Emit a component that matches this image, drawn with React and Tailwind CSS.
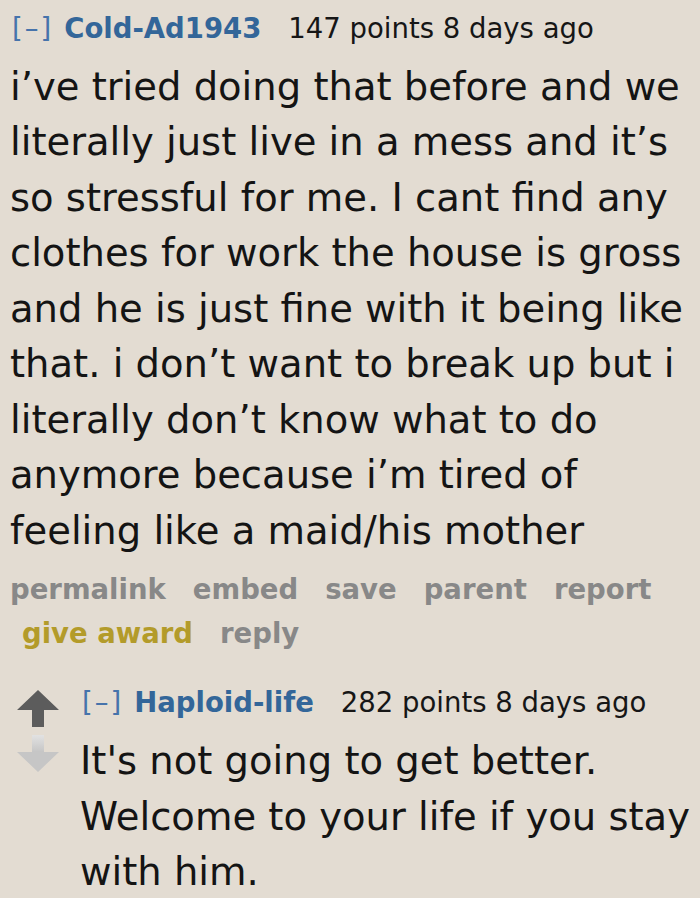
import React from 'react';

const UpArrow = () => (
  <svg width="42" height="37" viewBox="0 0 42 37">
    <path d="M21 0 L42 20 L27 20 L27 37 L15 37 L15 20 L0 20 Z" fill="#5c5c5c" />
  </svg>
);

const DownArrow = () => (
  <svg width="42" height="37" viewBox="0 0 42 37">
    <defs>
      <linearGradient id="dg" x1="0" y1="0" x2="0" y2="1">
        <stop offset="0" stopColor="#e2e2e2" />
        <stop offset="0.45" stopColor="#c6c6c6" />
        <stop offset="1" stopColor="#c6c6c6" />
      </linearGradient>
    </defs>
    <path d="M15 0 L27 0 L27 17 L42 17 L21 37 L0 17 L15 17 Z" fill="url(#dg)" />
  </svg>
);

const sans = { fontFamily: '"DejaVu Sans", Verdana, sans-serif' };

const firstLines = [
  'i’ve tried doing that before and we',
  'literally just live in a mess and it’s',
  'so stressful for me. I cant find any',
  'clothes for work the house is gross',
  'and he is just fine with it being like',
  'that. i don’t want to break up but i',
  'literally don’t know what to do',
  'anymore because i’m tired of',
  'feeling like a maid/his mother',
];

const replyLines = [
  "It's not going to get better.",
  'Welcome to your life if you stay',
  'with him.',
];

const Tagline = ({ author, points }) => (
  <div className="flex items-baseline whitespace-nowrap text-[27.5px] leading-[36px]">
    <span className="pl-[2px] text-[#4673ab] tracking-[2px]">[–]</span>
    <span className="ml-[11px] font-bold text-[#336699]">{author}</span>
    <span className="ml-[27px] text-[#161616]">{points} points 8 days ago</span>
  </div>
);

export default function App() {
  return (
    <div className="min-h-[898px] w-[700px] bg-[#e3dcd2] overflow-hidden" style={sans}>
      {/* first comment */}
      <div className="pl-[10px] pt-[9.5px]">
        <Tagline author="Cold-Ad1943" points="147" />
        <div className="mt-[13.4px] text-[38.5px] leading-[55.5px] text-[#141414]">
          {firstLines.map((line, i) => (
            <div key={i} className="whitespace-nowrap">{line}</div>
          ))}
        </div>
        <div className="mt-[8.25px] text-[27.5px] leading-[44px] font-bold text-[#888888] whitespace-nowrap">
          <div className="flex gap-[27px]">
            <span>permalink</span>
            <span>embed</span>
            <span>save</span>
            <span>parent</span>
            <span>report</span>
          </div>
          <div className="flex gap-[27px] pl-[12px]">
            <span className="text-[#b39b2a]">give award</span>
            <span>reply</span>
          </div>
        </div>
      </div>

      {/* reply */}
      <div className="mt-[29px] flex pl-[17px]">
        <div className="flex flex-col gap-[8px] pt-[6.5px] w-[42px]">
          <UpArrow />
          <DownArrow />
        </div>
        <div className="ml-[21px]">
          <Tagline author="Haploid-life" points="282" />
          <div className="mt-[13.4px] text-[38.5px] leading-[55.5px] text-[#141414]">
            {replyLines.map((line, i) => (
              <div key={i} className="whitespace-nowrap">{line}</div>
            ))}
          </div>
        </div>
      </div>
    </div>
  );
}
